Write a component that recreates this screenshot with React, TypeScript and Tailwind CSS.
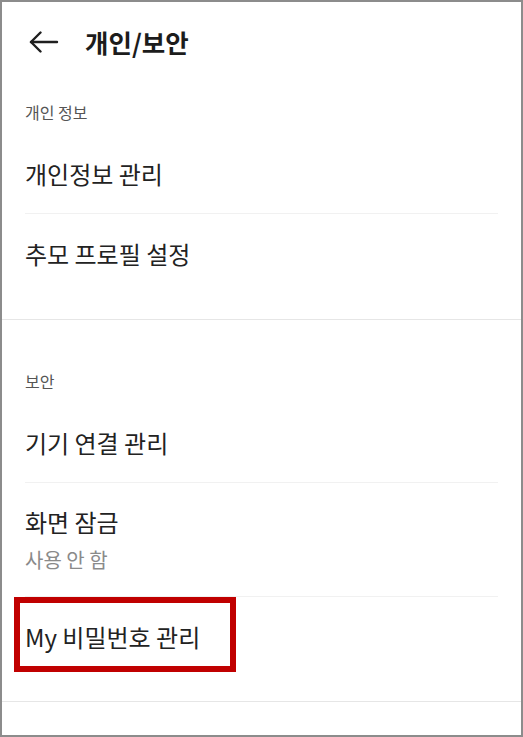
const font = { fontFamily: '"Noto Sans CJK KR", "Noto Sans", sans-serif' };

const ArrowLeft = () => (
  <svg width="30" height="22" viewBox="0 0 30 22" fill="none" stroke="#1f1f1f" strokeWidth="2.4" strokeLinecap="round" strokeLinejoin="round">
    <path d="M2 11H28" />
    <path d="M11.5 1.5L2 11l9.5 9.5" />
  </svg>
);

const Item = ({ label, last }: { label: string; last?: boolean }) => (
  <div className={`h-[80px] flex items-center ${last ? "" : "border-b border-[#f1f1f1]"}`}>
    <span className="text-[24px] leading-[30px] text-[#222]">{label}</span>
  </div>
);

export default function App() {
  return (
    <div style={font} className="w-[523px] h-[737px] border-2 border-[#8c8c8c] bg-white overflow-hidden">
      <header className="h-[80px] flex items-center pl-[27px] gap-[26px]">
        <ArrowLeft />
        <h1 className="text-[25.5px] font-bold text-[#1c1c1c] leading-none">개인/보안</h1>
      </header>

      <section className="px-[23px] pb-[25px]">
        <p className="pt-[20px] pb-[12px] text-[16px] leading-[20px] text-[#555]">개인 정보</p>
        <Item label="개인정보 관리" />
        <Item label="추모 프로필 설정" last />
      </section>

      <div className="h-px bg-[#e6e6e6]" />

      <section className="px-[23px] pb-[24px]">
        <p className="pt-[51px] pb-[12px] text-[16px] leading-[20px] text-[#555]">보안</p>
        <Item label="기기 연결 관리" />
        <div className="pt-[24px] pb-[25px] border-b border-[#f1f1f1]">
          <p className="text-[24px] leading-[30px] text-[#222]">화면 잠금</p>
          <p className="mt-[12px] text-[20px] leading-[22px] text-[#8a8a8a]">사용 안 함</p>
        </div>
        <div className="relative">
          <Item label="My 비밀번호 관리" last />
          <div className="absolute left-[-11px] top-0 w-[222px] h-[75px] border-[6px] border-[#c00000]" />
        </div>
      </section>

      <div className="h-px bg-[#e6e6e6]" />
    </div>
  );
}
